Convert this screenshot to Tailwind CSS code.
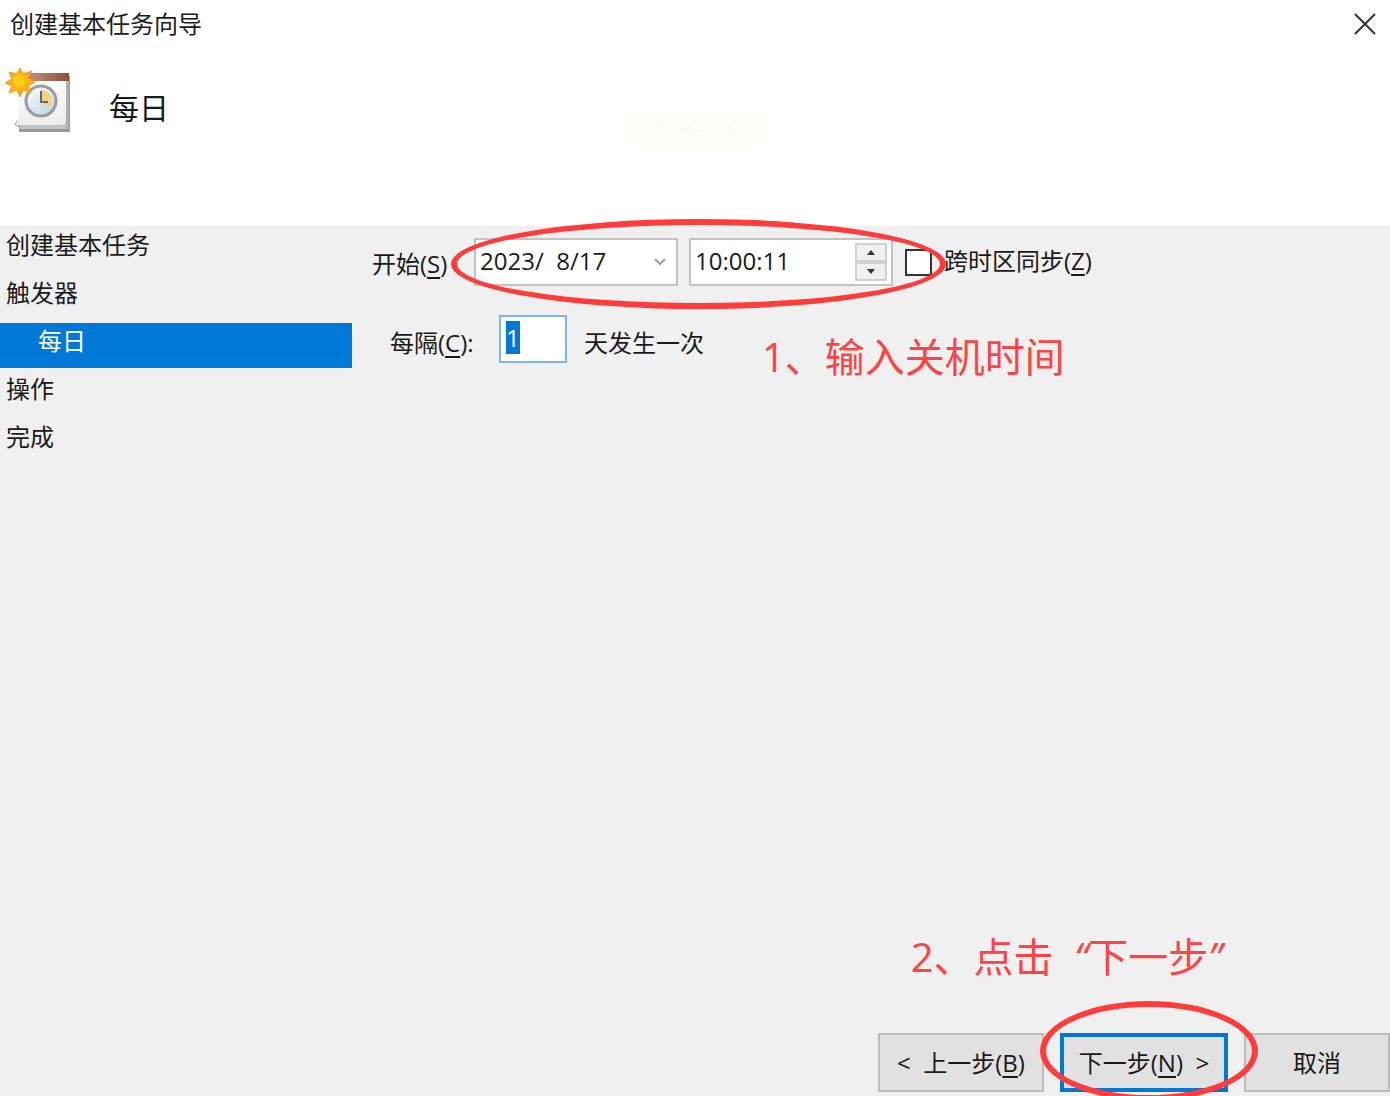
<!DOCTYPE html>
<html lang="zh-CN">
<head>
    <meta charset="UTF-8">
    <meta name="viewport" content="width=device-width, initial-scale=1.0">
    <title>创建基本任务向导</title>
    <script src="https://cdn.jsdelivr.net/npm/@tailwindcss/browser@4"></script>
</head>
<body class="bg-[#f0f0f0] text-[#1a1a1a] text-[24px] font-['Open_Sans','Noto_Sans_CJK_SC',sans-serif]">

<div class="relative flex min-h-screen flex-col overflow-hidden">

    <!-- Title bar and page heading -->
    <header class="h-[226px] bg-white">
        <div class="flex h-12 items-center justify-between pl-[10px] pr-[14px]">
            <h1 class="leading-8">创建基本任务向导</h1>
            <button type="button" aria-label="关闭">
                <svg class="h-[22px] w-[22px]" viewBox="0 0 22 22" fill="none" stroke="#333" stroke-width="2">
                    <path d="M1 1L21 21M21 1L1 21"/>
                </svg>
            </button>
        </div>
        <div class="flex items-start pl-[5px] pt-5">
            <!-- Calendar page with a clock and a "new" star -->
            <svg class="h-[66px] w-[66px] shrink-0" viewBox="0 0 66 66">
                <defs>
                    <linearGradient id="page" x1="0" y1="0" x2="0" y2="1">
                        <stop offset="0" stop-color="#ffffff"/>
                        <stop offset="1" stop-color="#ececec"/>
                    </linearGradient>
                    <linearGradient id="band" x1="0" y1="0" x2="1" y2="0">
                        <stop offset="0" stop-color="#c99a86"/>
                        <stop offset="1" stop-color="#8a503f"/>
                    </linearGradient>
                    <linearGradient id="face" x1="0" y1="0" x2="1" y2="1">
                        <stop offset="0" stop-color="#ffffff"/>
                        <stop offset="1" stop-color="#b9cfe0"/>
                    </linearGradient>
                    <radialGradient id="sun">
                        <stop offset="0" stop-color="#ffd21c"/>
                        <stop offset="1" stop-color="#f99a10"/>
                    </radialGradient>
                </defs>
                <path d="M14 8H65V64H14V59L9 57L14 50Z" fill="#9a9a9a"/>
                <path d="M14 7H61V53Q61 57 57 57H10Q13 54 14 46Z" fill="url(#page)"/>
                <path d="M10 57H57Q61 57 61 53V61H15V58H10Z" fill="#c4c4c4"/>
                <path d="M18 5H64V13H18Z" fill="url(#band)"/>
                <path d="M61 13H64V61H61Z" fill="#b0b0b0"/>
                <circle cx="36" cy="33" r="15" fill="url(#face)" stroke="#9a9da0" stroke-width="3"/>
                <path d="M36 33V22A11 11 0 0 1 45 39Z" fill="#f3d27c"/>
                <path d="M36 23V34H43" fill="none" stroke="#5d6a75" stroke-width="2"/>
                <path d="M15 0L18 6L27 3L23 10L30 14L23 18L26 25L18 22L15 29L12 22L4 25L7 18L0 15L7 11L4 4L12 6Z" fill="url(#sun)" stroke="#f9a01a" stroke-linejoin="round"/>
                <circle cx="15" cy="14" r="9" fill="#fdb515"/>
                <circle cx="14" cy="13" r="6" fill="#ffcc1a"/>
            </svg>
            <h2 class="ml-[38px] mt-5 text-[30px] leading-10">每日</h2>
        </div>
        <p class="absolute left-[45%] top-[111px] h-[34px] w-[139px] bg-[#fffffa] pl-3 text-[20px] leading-[34px] text-[#f9f9f5] font-['Liberation_Serif',serif]">1768964276</p>
    </header>

    <div class="flex flex-1">
        <!-- Wizard steps -->
        <nav class="w-[352px] shrink-0 pt-px">
            <ul class="flex flex-col gap-[3px] leading-9">
                <li class="h-[45px] pl-[6px]">创建基本任务</li>
                <li class="h-[45px] pl-[6px]">触发器</li>
                <li class="h-[45px] bg-[#0078d7] pl-[38px] text-white" aria-current="step">每日</li>
                <li class="h-[45px] pl-[6px]">操作</li>
                <li class="h-[45px] pl-[6px]">完成</li>
            </ul>
        </nav>

        <main class="flex-1 pt-3 pl-5">
            <div class="relative flex items-center">
                <label for="startDate" class="w-[102px] pt-1">开始(<u class="underline-offset-4">S</u>)</label>
                <div class="flex h-12 w-[204px] items-center border-2 border-[#c3c3c3] bg-white pl-1 pr-2">
                    <input id="startDate" type="text" value="2023/  8/17" class="min-w-0 flex-1 pb-[2px] outline-none">
                    <button type="button" aria-label="选择日期">
                        <svg class="h-4 w-4" viewBox="0 0 16 16" fill="none" stroke="#a0a0a0" stroke-width="2">
                            <path d="M3 5L8 10L13 5"/>
                        </svg>
                    </button>
                </div>
                <div class="ml-[11px] flex h-12 w-[204px] items-center border-2 border-[#c3c3c3] bg-white pl-1 pr-1">
                    <input type="text" value="10:00:11" aria-label="开始时间" class="min-w-0 flex-1 pb-[2px] outline-none">
                    <div class="flex flex-col">
                        <button type="button" aria-label="增加" class="flex h-[19px] w-8 items-center justify-center border-2 border-[#d0d0d0] bg-[#f0f0f0]">
                            <svg class="h-[5px] w-2" viewBox="0 0 8 5"><path d="M0 5L4 0L8 5Z" fill="#333"/></svg>
                        </button>
                        <button type="button" aria-label="减少" class="flex h-[19px] w-8 items-center justify-center border-2 border-[#d0d0d0] bg-[#f0f0f0]">
                            <svg class="h-[5px] w-2" viewBox="0 0 8 5"><path d="M0 0L4 5L8 0Z" fill="#333"/></svg>
                        </button>
                    </div>
                </div>
                <input id="syncZones" type="checkbox" class="ml-3 h-[27px] w-[27px] appearance-none border-2 border-[#333] bg-white">
                <label for="syncZones" class="ml-3 pb-[2px]">跨时区同步(<u class="underline-offset-4">Z</u>)</label>

                <!-- Hand-drawn ring round date and time -->
                <div class="pointer-events-none absolute -top-[19px] left-[79px] h-[90px] w-[495px] rounded-[50%] border-[6px] border-[#ff3b3b]"></div>
            </div>

            <div class="relative mt-[29px] flex items-center pl-[18px]">
                <label for="interval" class="w-[109px] pt-2">每隔(<u class="underline-offset-4">C</u>):</label>
                <input id="interval" type="text" value="1" autofocus class="h-12 w-[68px] border-2 border-[#7ab8ec] bg-white pb-1 pl-[5px] outline-none selection:bg-[#0078d7] selection:text-white">
                <span class="ml-[17px] pt-2">天发生一次</span>
                <p class="-mb-4 -mt-2 ml-[58px] pt-7 text-[40px] leading-10 text-[#ff4242]">1、输入关机时间</p>
            </div>
        </main>
    </div>

    <footer class="flex flex-col items-end pb-1">
        <p class="mb-[50px] mr-[168px] text-[40px] leading-[52px] text-[#ff4242]">2、点击&nbsp;&nbsp;<i>“</i>下一步<i>”</i></p>
        <div class="relative flex gap-4">
            <button type="button" class="h-[59px] w-[166px] border-2 border-[#bdbdbd] bg-[#e1e1e1]">&lt;&nbsp; 上一步(<u class="underline-offset-4">B</u>)</button>
            <button type="button" class="h-[59px] w-[168px] border-4 border-[#0078d7] bg-[#e1e1e1]">下一步(<u class="underline-offset-4">N</u>)&nbsp; &gt;</button>
            <button type="button" class="h-[59px] w-[146px] border-2 border-[#bdbdbd] bg-[#e1e1e1]">取消</button>
            <!-- Hand-drawn ring round the next button -->
            <div class="pointer-events-none absolute -top-8 right-[132px] h-[100px] w-[218px] rounded-[50%] border-[6px] border-[#ff3b3b]"></div>
        </div>
    </footer>
</div>

<script>
    // The interval starts out selected
    const interval = document.getElementById('interval');
    interval.focus();
    interval.select();
</script>
</body>
</html>
